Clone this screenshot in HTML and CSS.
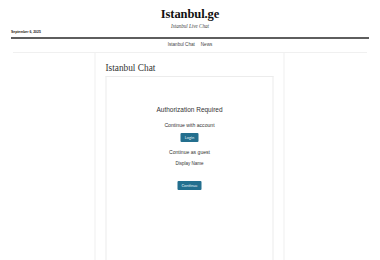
FILE: index.html
```html
<!DOCTYPE html>
<html lang="en">
<head>
<meta charset="utf-8">
<title>Istanbul.ge</title>
<link rel="stylesheet" href="styles.css">
</head>
<body>
<header class="masthead">
  <div class="brand">
    <div class="site-title">Istanbul.ge</div>
    <div class="tagline">Istanbul Live Chat</div>
  </div>
  <div class="dateline">September 6, 2025</div>
  <nav class="nav">
    <a href="#">Istanbul Chat</a>
    <a href="#">News</a>
  </nav>
</header>
<main class="column">
  <h2 class="page-title">Istanbul Chat</h2>
  <section class="chat-box">
    <h3 class="auth-title">Authorization Required</h3>
    <p class="label">Continue with account</p>
    <button class="btn">Login</button>
    <p class="label guest">Continue as guest</p>
    <p class="small">Display Name</p>
    <button class="btn continue">Continue</button>
  </section>
</main>
</body>
</html>
```
FILE: styles.css
```css
html, body {
  margin: 0;
  padding: 0;
  background: #ffffff;
  height: 100%;
}
body {
  font-family: "Liberation Sans", Arial, sans-serif;
  color: #333;
  display: flex;
  flex-direction: column;
  overflow: hidden;
}
.masthead {
  display: flex;
  flex-direction: column;
}
.brand {
  display: flex;
  flex-direction: column;
  align-items: center;
  padding-top: 7px;
}
.site-title {
  font-family: "Liberation Serif", "Times New Roman", serif;
  font-weight: 700;
  font-size: 12.5px;
  line-height: 14px;
  color: #111;
  letter-spacing: -0.1px;
}
.tagline {
  font-family: "Liberation Serif", "Times New Roman", serif;
  font-style: italic;
  font-size: 5.1px;
  line-height: 6px;
  margin-top: 2px;
  color: #444;
}
.dateline {
  margin: 0 11px;
  padding-top: 0.5px;
  padding-bottom: 2px;
  font-size: 3.4px;
  font-weight: 700;
  line-height: 5px;
  color: #222;
  border-bottom: 2px solid #5e5e5e;
}
.nav {
  display: flex;
  justify-content: center;
  gap: 6px;
  margin: 0 13px;
  padding-top: 3px;
  padding-bottom: 4px;
  border-bottom: 1px solid #f0f0f0;
}
.nav a {
  font-size: 4.6px;
  line-height: 6px;
  color: #444;
  text-decoration: none;
}
.column {
  flex: 1;
  width: 168px;
  margin: 0 auto;
  padding: 0 10px;
  border-left: 1px solid #f0f0f0;
  border-right: 1px solid #f0f0f0;
  display: flex;
  flex-direction: column;
  transform: translateX(-0.5px);
}
.page-title {
  font-family: "Liberation Serif", "Times New Roman", serif;
  font-weight: 400;
  font-size: 9.3px;
  line-height: 10px;
  margin: 10px 0 3px;
  color: #333;
}
.chat-box {
  flex: 1;
  border: 1px solid #ececec;
  border-bottom: none;
  display: flex;
  flex-direction: column;
  align-items: center;
  padding-top: 29px;
}
.auth-title {
  margin: 0;
  font-weight: 400;
  font-size: 6.5px;
  line-height: 8px;
  color: #333;
}
.label {
  margin: 8px 0 0;
  font-size: 5.1px;
  line-height: 7px;
  color: #333;
}
.label.guest {
  margin-top: 7px;
}
.small {
  margin: 5px 0 0;
  font-size: 4.5px;
  line-height: 6px;
  color: #333;
}
.btn {
  margin-top: 4px;
  height: 9px;
  padding: 0 4px;
  border: none;
  border-radius: 1px;
  background: #236f8e;
  color: #e6f3f8;
  font-family: "Lato", "Liberation Sans", sans-serif;
  font-size: 4px;
  line-height: 9px;
  cursor: pointer;
}
.btn.continue {
  margin-top: 14px;
}
```
